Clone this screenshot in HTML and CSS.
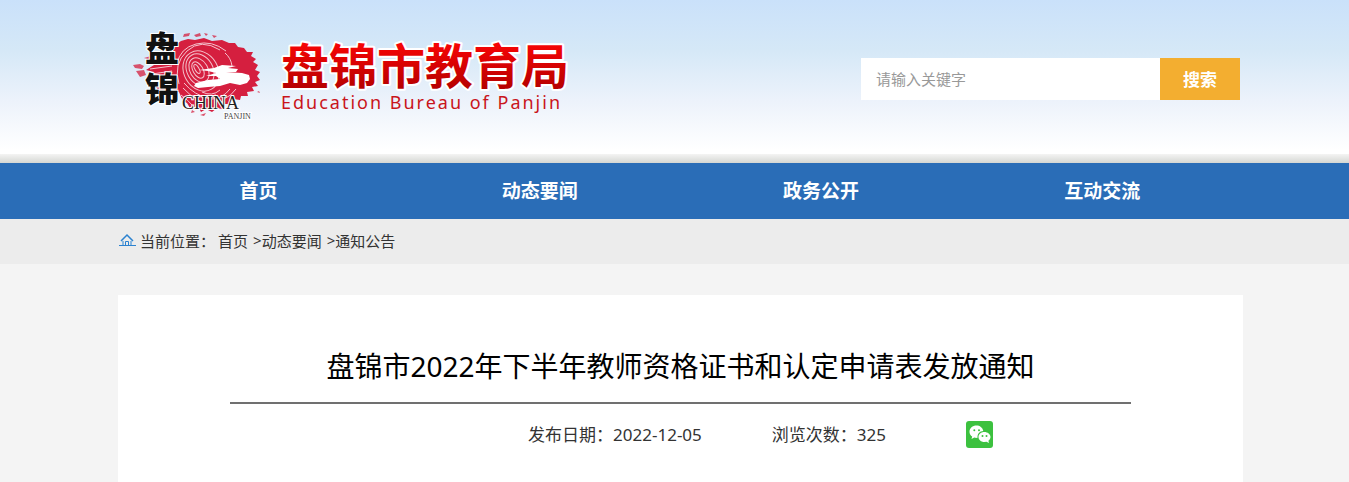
FILE: index.html
```
<!DOCTYPE html>
<html lang="zh-CN">
<head>
    <meta charset="UTF-8">
    <meta name="viewport" content="width=device-width, initial-scale=1.0">
    <title>盘锦市教育局</title>
    <link rel="stylesheet" href="styles.css">
</head>
<body>
    <!-- Header -->
    <header class="header">
        <div class="container header-inner">
            <a class="brand" href="#">
                <svg class="emblem" width="136" height="106" viewBox="0 0 136 106">
                    <path fill="#d51f3f" d="M49 19 L56 17 L63 18 L72 16 L80 19 L90 18 L97 21 L103 21 L106 25 L112 26 L115 30 L121 30 L119 34 L124 37 L121 40 L126 43 L123 48 L128 50 L125 54 L128 58 L123 60 L126 64 L120 65 L122 69 L115 70 L116 74 L109 74 L108 78 L101 77 L98 82 L92 82 L90 87 L85 86 L80 90 L74 87 L69 90 L66 84 L58 86 L55 81 L51 79 L47 70 L38 66 L30 70 L22 64 L24 58 L18 56 L22 50 L14 48 L22 43 L19 38 L30 34 L40 32 L42 24 Z"/>
                    <g fill="#d51f3f" opacity="0.75">
                        <path d="M1 43 L8 42 L12 44 L10 47 L3 46 Z M4 49 L12 48 L14 53 L8 55 Z M12 36 L19 34 L18 38 Z M16 58 L22 59 L23 65 L18 64 Z"/>
                        <path d="M52 12 L58 11 L57 14 L51 15 Z M62 13 L68 11 L69 14 L64 15 Z M72 11 L76 12 L74 14 Z M80 13 L85 14 L82 16 Z M68 93 L74 91 L72 94 Z M125 70 L127 69 L128 71 Z M60 88 L63 90 L59 91 Z"/>
                    </g>
                    <g fill="none" stroke="#f5c4cf" stroke-width="1">
                        <ellipse cx="65" cy="47" rx="2" ry="5" transform="rotate(-30 65 47)"/>
                        <ellipse cx="66" cy="48" rx="5" ry="9" transform="rotate(-30 66 48)"/>
                        <ellipse cx="67" cy="48" rx="9" ry="13" transform="rotate(-30 67 48)"/>
                        <ellipse cx="68" cy="48" rx="13" ry="17" transform="rotate(-30 68 48)"/>
                        <ellipse cx="69" cy="49" rx="17" ry="21" transform="rotate(-30 69 49)"/>
                        <path d="M47 62 Q41 42 55 29 T88 28 M45 42 Q48 26 64 22 T94 29 M49 73 Q56 78 61 84 M51 66 Q59 75 68 79 M52 61 Q62 73 78 77 M88 68 Q80 75 70 70 M98 67 Q90 77 80 77 M104 67 Q99 74 92 77 M93 31 Q99 36 100 44"/>
                        <path d="M18 47 L40 44 M20 52 L40 49 M24 39 L42 37 M24 63 L40 58"/>
                    </g>
                    <path fill="#fff" d="M67 48 L82 46 L90 43 L104 44 L96 46 L106 47 L104 50 L94 50 L110 51 L117 53 L118 57 L115 61 L108 63 L98 61 L88 64 L76 65 L66 66 L62 64 L64 61 L76 58 L88 57 L84 54 L74 54 L84 51 L76 49 Z"/>
                    <text class="emblem-name" x="13" y="39">盘</text>
                    <text class="emblem-name" x="13" y="80">锦</text>
                    <text class="emblem-china" x="50" y="87">CHINA</text>
                    <text class="emblem-panjin" x="92" y="97">PANJIN</text>
                </svg>
                <svg class="site-name" width="300" height="106" viewBox="0 0 300 106">
                    <defs>
                        <linearGradient id="red" x1="0" y1="0" x2="0" y2="1">
                            <stop offset="0.2" stop-color="#f90505"/>
                            <stop offset="0.85" stop-color="#b70000"/>
                        </linearGradient>
                    </defs>
                    <text class="name-cn" x="3" y="62" fill="url(#red)">盘锦市教育局</text>
                    <text class="name-en" x="3" y="87">Education Bureau of Panjin</text>
                </svg>
            </a>
            <form class="search">
                <input class="search-input" type="text" placeholder="请输入关键字" aria-label="请输入关键字">
                <button class="search-btn" type="button">搜索</button>
            </form>
        </div>
    </header>

    <!-- Main navigation -->
    <nav class="nav">
        <div class="container nav-inner">
            <a href="#">首页</a>
            <a href="#">动态要闻</a>
            <a href="#">政务公开</a>
            <a href="#">互动交流</a>
        </div>
    </nav>

    <!-- Breadcrumb -->
    <div class="location">
        <div class="container location-inner">
            <svg class="home-icon" width="18" height="14" viewBox="0 0 18 14">
                <path fill="none" stroke="#2b82d0" stroke-width="1.5" d="M3 8 L9 2 L15 8"/>
                <path fill="none" stroke="#2b82d0" d="M5 8 V13 M13 8 V13 M7.5 13 V8.500 H10.500 V13"/>
                <path fill="#2b82d0" d="M1 12 H18 V13 H1 Z"/>
            </svg>
            <span class="location-label">当前位置：</span>
            <a href="#">首页</a><span class="sep">&gt;</span><a href="#">动态要闻</a><span class="sep">&gt;</span><a href="#">通知公告</a>
        </div>
    </div>

    <!-- Article -->
    <main class="main">
        <article class="container article">
            <h1 class="article-title">盘锦市2022年下半年教师资格证书和认定申请表发放通知</h1>
            <div class="article-meta">
                <span>发布日期：2022-12-05</span>
                <span>浏览次数：325</span>
                <a class="wechat" href="#" aria-label="微信">
                    <svg width="27" height="27" viewBox="0 0 27 27">
                        <rect width="27" height="27" rx="3" fill="#3cc13f"/>
                        <path fill="#fff" d="M10.5 4.5 C6.500 4.500 3.500 7.200 3.500 10.700 C3.500 12.800 4.500 14.500 6.200 15.600 L5.500 18 L8.300 16.600 C9.600 17 10.500 17 11.600 16.800 C11 12.500 14 10 17.300 9.900 C16.500 6.500 13.800 4.500 10.500 4.500 Z"/>
                        <path fill="#fff" d="M18.300 11 C15 11 12.500 13.200 12.500 16 C12.500 18.800 15 21 18.300 21 L20.500 20.700 L23 22 L22.400 19.800 C23.700 18.800 24.500 17.500 24.500 16 C24.500 13.200 21.700 11 18.300 11 Z"/>
                        <g fill="#3cc13f">
                            <circle cx="8.300" cy="9.300" r="1"/>
                            <circle cx="13" cy="9.300" r="1"/>
                            <circle cx="16.500" cy="15" r="1"/>
                            <circle cx="20.500" cy="15" r="1"/>
                        </g>
                    </svg>
                </a>
            </div>
        </article>
    </main>
</body>
</html>
```
FILE: styles.css
```
* {
    box-sizing: border-box;
}

body {
    margin: 0;
    min-height: 100vh;
    display: flex;
    flex-direction: column;
    background-color: #f4f4f4;
    color: #333;
    font-family: "Noto Sans", "Noto Sans CJK SC", sans-serif;
}

a {
    color: inherit;
    text-decoration: none;
}

.container {
    width: 100%;
    max-width: 1125px;
    margin: 0 auto;
}

.header,
.nav,
.location,
.main {
    padding-left: 12px;
}

/* Header */
.header {
    background: linear-gradient(to bottom, transparent 154px, #f4f4f3 154px, #d5d7d3 163px),
        linear-gradient(to bottom, #cae1fa 0, #d5e8f7 50px, #ecf2fb 100px, #fff 150px);
}

.header-inner {
    height: 163px;
    display: flex;
    justify-content: space-between;
    padding: 22px 3px 0 14px;
}

.brand {
    display: flex;
    gap: 10px;
}

.emblem,
.site-name {
    display: block;
}

.emblem-name {
    font: 900 34px "Noto Sans CJK SC", sans-serif;
    fill: #111;
    stroke: #fff;
    stroke-width: 2px;
    paint-order: stroke;
}

.emblem-china,
.emblem-panjin {
    font-family: "Liberation Serif", serif;
    stroke: #fff;
    stroke-width: 2px;
    paint-order: stroke;
}

.emblem-china {
    font-size: 18px;
    fill: #222;
}

.emblem-panjin {
    font-size: 8px;
    fill: #444;
}

.name-cn {
    font: bold 48px "Noto Sans CJK SC", sans-serif;
    stroke: #fff;
    stroke-width: 4px;
    stroke-linejoin: round;
    paint-order: stroke;
}

.name-en {
    font-family: "Noto Sans", sans-serif;
    font-size: 18px;
    letter-spacing: 2px;
    fill: #c9151b;
}

.search {
    display: flex;
    height: 42px;
    margin-top: 36px;
}

.search-input {
    width: 299px;
    padding: 0 15px 2px;
    border: 0;
    background-color: #fff;
    font: 15px "Noto Sans CJK SC", sans-serif;
}

.search-input::placeholder {
    color: #999;
}

.search-btn {
    width: 80px;
    padding: 0 0 2px;
    border: 0;
    background-color: #f3ae30;
    color: #fff;
    font: bold 17px "Noto Sans CJK SC", sans-serif;
}

/* Navigation */
.nav {
    background-color: #2a6db7;
}

.nav-inner {
    display: grid;
    grid-template-columns: repeat(4, 1fr);
}

.nav a {
    color: #fff;
    font-size: 19px;
    font-weight: bold;
    line-height: 56px;
    text-align: center;
}

/* Breadcrumb */
.location {
    background-color: #ececec;
}

.location-inner {
    display: flex;
    align-items: center;
    height: 45px;
    padding-bottom: 3px;
    font-size: 15px;
}

.home-icon {
    margin-right: 4px;
}

.location-label {
    margin-right: 3px;
}

.sep {
    margin-left: 5px;
}

/* Article */
.main {
    flex: 1;
    display: flex;
    padding-top: 31px;
}

.article {
    padding: 42px 112px 0;
    background-color: #fff;
}

.article-title {
    margin: 0;
    padding-bottom: 7px;
    border-bottom: 2px solid #707070;
    color: #000;
    font-size: 28px;
    font-weight: normal;
    line-height: 58px;
    text-align: center;
}

.article-meta {
    display: flex;
    justify-content: flex-end;
    align-items: center;
    gap: 70px;
    padding: 17px 138px 17px 0;
    font-size: 17px;
    line-height: 24px;
}

.wechat {
    margin-left: 10px;
}

.wechat svg {
    display: block;
}
```
